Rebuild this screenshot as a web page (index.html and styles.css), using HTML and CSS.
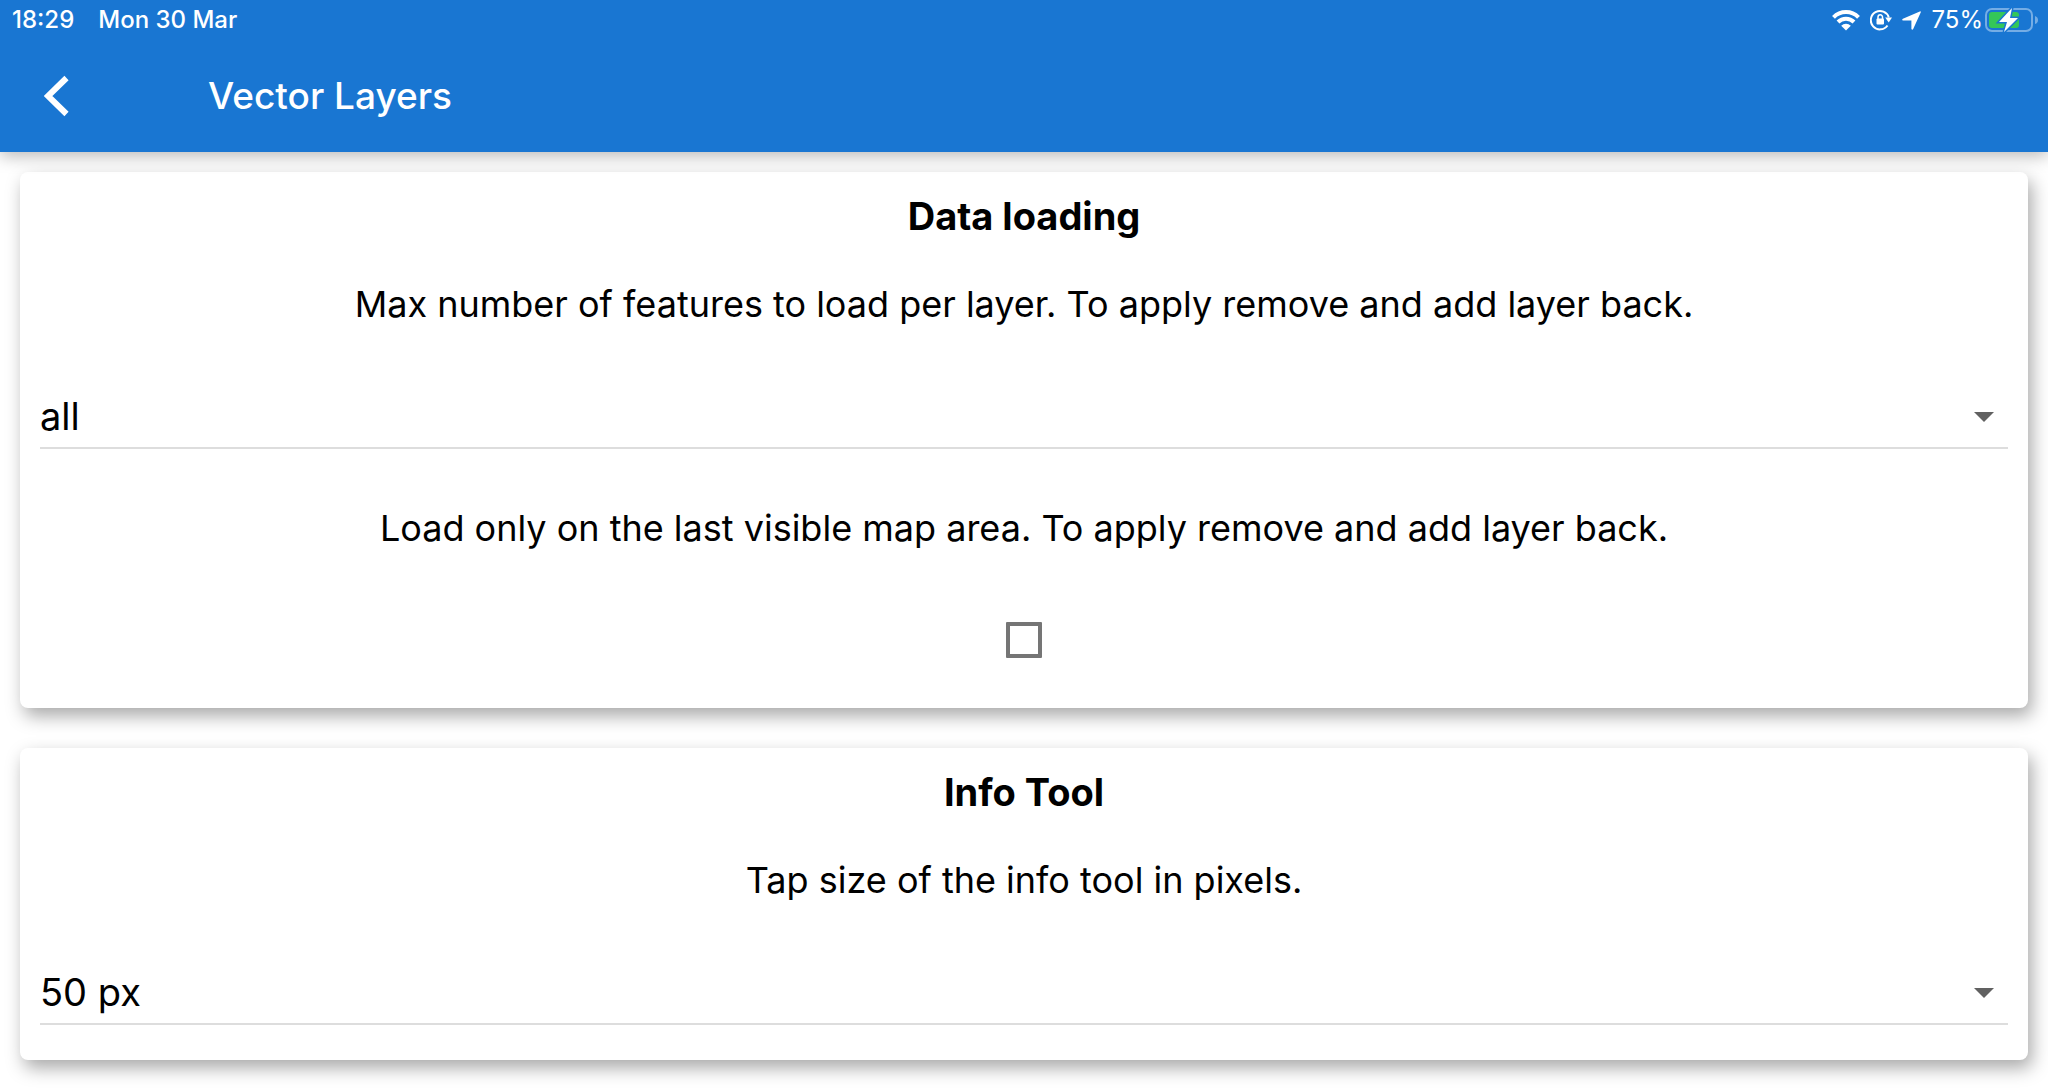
FILE: index.html
```html
<!DOCTYPE html>
<html lang="en">
<head>
<meta charset="utf-8">
<meta name="viewport" content="width=device-width, initial-scale=1">
<title>Vector Layers</title>
<link rel="stylesheet" href="styles.css">
</head>
<body>
<header class="app-bar">
  <div class="status">
    <div class="status-group status-left"><span>18:29</span><span>Mon 30 Mar</span></div>
    <div class="status-group status-right">
      <svg class="wifi" width="28" height="22" viewBox="0 0 28 22" aria-label="Wi-Fi">
        <g fill="none" stroke="#fff" stroke-width="4">
          <path d="M1.5 8.300a17.500 17.500 0 0 1 25 0"/>
          <path d="M6 13a11.300 11.300 0 0 1 16 0"/>
        </g>
        <path d="M14 21.500l-4.800-4.800a6.800 6.800 0 0 1 9.600 0z" fill="#fff"/>
      </svg>
      <svg class="lock" width="22" height="22" viewBox="0 0 22 22" aria-label="Rotation lock">
        <path d="M18.800 8.500A9.200 9.200 0 1 0 17.500 16.500" fill="none" stroke="#fff" stroke-width="2"/>
        <path d="M15.200 8.500h6.800L18.700 13.500z" fill="#fff"/>
        <rect x="6.500" y="9.500" width="7.500" height="6" rx="1" fill="#fff"/>
        <path d="M8 10V8a2.200 2.200 0 0 1 4.500 0v2" fill="none" stroke="#fff" stroke-width="1.500"/>
      </svg>
      <svg class="arrow" width="19" height="19" viewBox="0 0 19 19" aria-label="Location">
        <path d="M18.800 1.200Q19 0 17.800.5L.9 7.800Q-.6 8.800 1 9.600H9.400V18q.9 1.600 1.800 0z" fill="#fff"/>
      </svg>
      <span class="power">
        <span>75%</span>
        <svg class="battery" width="54" height="24" viewBox="0 0 54 24" aria-label="Charging">
          <rect x="1" y="1" width="46" height="22" rx="6" fill="none" stroke="#75ade5" stroke-width="2"/>
          <path d="M50 8q3 1 3 4t-3 4z" fill="#75ade5"/>
          <rect x="4" y="4" width="30" height="16" rx="3" fill="#34c759"/>
          <path d="M27 0L14 14h8l-3 10L33 10h-8z" fill="#fff" stroke="#1976d2" stroke-width="3" paint-order="stroke"/>
        </svg>
      </span>
    </div>
  </div>
  <div class="toolbar">
    <button class="back" type="button" aria-label="Back">
      <svg width="26" height="42" viewBox="0 0 26 42"><path d="M22.500 3L4 21l18.500 18" fill="none" stroke="#fff" stroke-width="6"/></svg>
    </button>
    <h1 class="title">Vector Layers</h1>
  </div>
</header>
<main class="content">
  <section class="card card-tall">
    <h2 class="card-title">Data loading</h2>
    <label class="caption" for="max">Max number of features to load per layer. To apply remove and add layer back.</label>
    <div class="field"><select id="max" class="select"><option>all</option></select></div>
    <label class="caption caption-next" for="visible">Load only on the last visible map area. To apply remove and add layer back.</label>
    <input id="visible" class="check" type="checkbox">
  </section>
  <section class="card">
    <h2 class="card-title">Info Tool</h2>
    <label class="caption" for="tap">Tap size of the info tool in pixels.</label>
    <div class="field"><select id="tap" class="select"><option>50 px</option></select></div>
  </section>
</main>
</body>
</html>
```
FILE: styles.css
```css
* { box-sizing: border-box; }
body {
  margin: 0;
  background: #fff;
  color: #000;
  font-family: Inter, "Liberation Sans", sans-serif;
  font-size: 36px;
  line-height: 48px;
}
.app-bar {
  position: relative;
  z-index: 1;
  background: #1976d2;
  color: #fff;
  box-shadow: 0 4px 16px rgba(0, 0, 0, .28);
}
.status {
  display: flex;
  justify-content: space-between;
  height: 40px;
  padding: 0 9px 0 12px;
  font-size: 24px;
  line-height: 40px;
}
.status-group { display: flex; align-items: center; }
.status-left { gap: 24px; font-weight: 500; }
.status-right { gap: 10px; }
.power { display: flex; align-items: center; gap: 2px; }
.toolbar {
  display: flex;
  align-items: center;
  height: 112px;
  padding-left: 44px;
}
.back {
  display: flex;
  width: 164px;
  padding: 0;
  border: 0;
  background: none;
}
.title { margin: 0; font-size: 37px; font-weight: 500; }
.content {
  display: flex;
  flex-direction: column;
  gap: 40px;
  padding: 20px 20px 28px;
}
.card {
  display: flex;
  flex-direction: column;
  align-items: center;
  padding: 20px 20px 35px;
  border-radius: 8px;
  background: #fff;
  box-shadow: 4px 8px 18px rgba(0, 0, 0, .34);
}
.card-tall { padding-bottom: 50px; }
.card-title { margin: 0 0 40px; font-size: 38px; font-weight: 700; }
.caption { text-align: center; }
.caption-next { margin-top: 55px; }
.field {
  display: flex;
  align-items: center;
  align-self: stretch;
  margin-top: 56px;
  border-bottom: 2px solid #ddd;
  font-size: 38px;
}
.field::after {
  content: "";
  width: 0;
  margin: 2px 14px 0 -34px;
  border: 10px solid transparent;
  border-top-color: #616161;
  border-bottom: 0;
  pointer-events: none;
}
.select {
  flex: 1;
  height: 63px;
  padding: 0;
  border: 0;
  background: none;
  color: inherit;
  font: inherit;
  appearance: none;
}
.check {
  width: 36px;
  height: 36px;
  margin: 70px 0 0;
  border: 4px solid #757575;
  border-radius: 1px;
  background: #fff;
  appearance: none;
}
```
